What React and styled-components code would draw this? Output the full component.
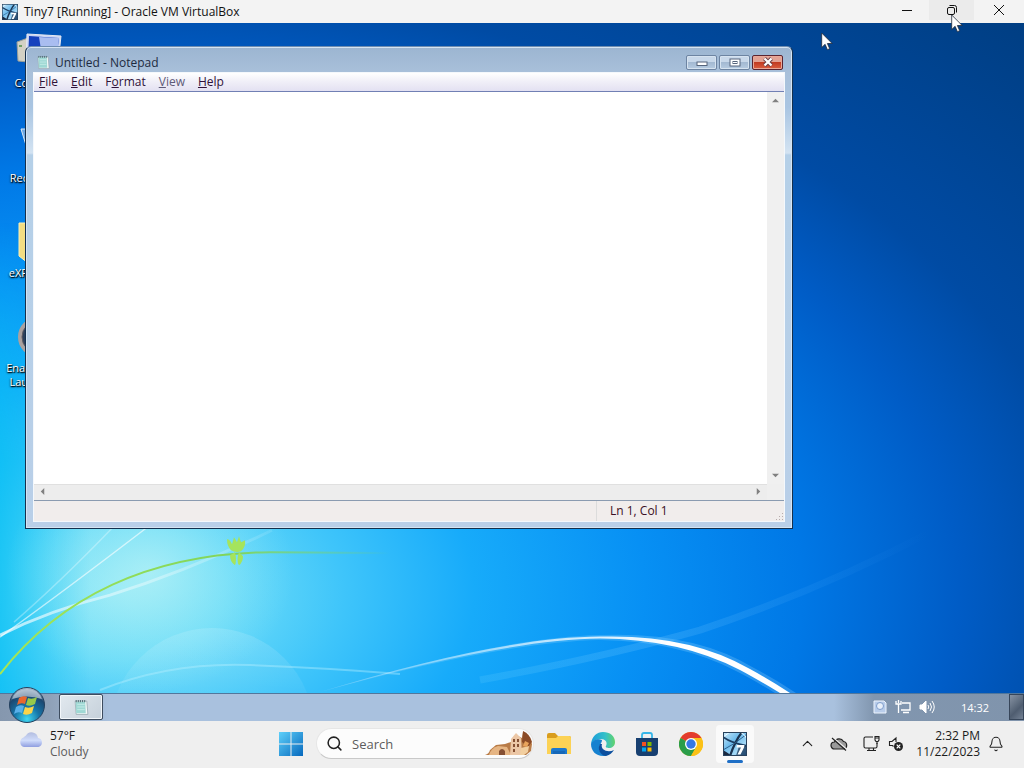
import styled, { createGlobalStyle, css } from 'styled-components';
import { Search, Bell, ChevronUp } from 'lucide-react';

// The notepad window covers the rest of every label
const desktopIcons = [
  { lines: ['Co'], kind: 'computer' },
  { lines: ['Rec'], kind: 'bin' },
  { lines: ['eXP'], kind: 'folder' },
  { lines: ['Enal', 'Lau'], kind: 'disc' },
];

const menus = [
  { key: 'F', before: '', after: 'ile' },
  { key: 'E', before: '', after: 'dit' },
  { key: 'o', before: 'F', after: 'rmat' },
  { key: 'V', before: '', after: 'iew', muted: true },
  { key: 'H', before: '', after: 'elp' },
];

function TinyLogo({ size }) {
  return (
    <svg width={size} height={size} viewBox="0 0 24 24" aria-hidden="true">
      <defs>
        <linearGradient id={`tiny${size}`} x1="0" y1="0" x2="1" y2="1">
          <stop offset="0" stopColor="#cdeaf9" />
          <stop offset="0.4" stopColor="#6fbcec" />
          <stop offset="0.7" stopColor="#a5d9f6" />
          <stop offset="1" stopColor="#2a86cc" />
        </linearGradient>
      </defs>
      <rect width="24" height="24" fill={`url(#tiny${size})`} />
      <path d="M0 18q5 3 9 6H0z" fill="#1a2940" />
      <path d="M0 5q8 6 24 9" fill="none" stroke="#1b3d62" strokeWidth="1.800" />
      <path d="M19 0Q12 9 7 24" fill="none" stroke="#1b3350" strokeWidth="2.200" />
      <path d="M0 18Q12 12 24 2" fill="none" stroke="#2c608f" strokeWidth="1" />
      <path d="M0 5L7 0M17 0q5 2 7 7" fill="none" stroke="#f0faff" strokeWidth="1" />
      <path d="M13 24l3-10h8v10z" fill="#1b3555" fillOpacity="0.75" />
      <path d="M14 13h7.500l-.5 2.500-3.500 7h-3l3.500-7h-4.500z" fill="#fff" />
      <rect x="0.5" y="0.5" width="23" height="23" fill="none" stroke="#28415c" />
    </svg>
  );
}

function NotepadIcon({ size }) {
  return (
    <svg width={size} height={size} viewBox="0 0 16 16" aria-hidden="true">
      <path d="M2 2h11l1 12.500H3z" fill="#f4f8f8" stroke="#92a5ad" strokeWidth="0.700" />
      <path d="M2.500 2.500h9l.5 11h-9z" fill="#9fd8d4" />
      <path d="M4 5h7M4 7.500h7M4 10h7" stroke="#c9eeea" strokeWidth="0.800" />
      <path d="M3 1v2M5 1v2M7 1v2M9 1v2M11 1v2" stroke="#47666d" strokeWidth="0.900" />
    </svg>
  );
}

function Cursor() {
  return (
    <svg width="12" height="19" viewBox="0 0 12 19" aria-hidden="true">
      <path d="M.7 1v14.500l3.400-3.200 2.300 5.400 2.300-1-2.300-5.200h4.800z" fill="#fff" stroke="#222b3a" strokeWidth="0.800" />
    </svg>
  );
}

function DesktopGlyph({ kind }) {
  if (kind === 'computer') {
    return (
      <svg width="48" height="48" viewBox="0 0 48 48" aria-hidden="true">
        <path d="M3 14l11-4v24l-10-1z" fill="#d3d1c4" stroke="#9aa09a" />
        <path d="M5 18h3" stroke="#4f8f4a" strokeWidth="1.500" />
        <path d="M13 6l34 2-3 27H12z" fill="#cbd6f4" stroke="#e6e9f2" />
        <path d="M15 8l30 2-3 24H14z" fill="#1541bd" />
        <path d="M25 9l20 1-3 24H29z" fill="#a9bdf0" />
      </svg>
    );
  }
  if (kind === 'bin') {
    return (
      <svg width="48" height="48" viewBox="0 0 48 48" aria-hidden="true">
        <path d="M7 6h34l-6 26H15z" fill="#b8d1e8" fillOpacity="0.6" stroke="#dce8f4" />
      </svg>
    );
  }
  if (kind === 'folder') {
    return (
      <svg width="48" height="48" viewBox="0 0 48 48" aria-hidden="true">
        <path d="M5 5h20l4 4h12v36H14l-9-7z" fill="#f3dd82" stroke="#fbf0b5" />
      </svg>
    );
  }
  return (
    <svg width="48" height="48" viewBox="0 0 48 48" aria-hidden="true">
      <circle cx="24" cy="24" r="18" fill="#2c405c" stroke="#aaa19f" strokeWidth="4" />
      <circle cx="24" cy="24" r="16" fill="none" stroke="#5d5b62" />
    </svg>
  );
}

function Wallpaper() {
  return (
    <WallpaperSvg viewBox="0 0 1024 671" preserveAspectRatio="none" aria-hidden="true">
      <defs>
        <radialGradient id="sky" gradientUnits="userSpaceOnUse" cx="0" cy="0" r="820" gradientTransform="translate(120 570) scale(1.600 1)">
          <stop offset="0" stopColor="#8de7f7" />
          <stop offset="0.08" stopColor="#6cdcf8" />
          <stop offset="0.17" stopColor="#3fc5fa" />
          <stop offset="0.27" stopColor="#17abfa" />
          <stop offset="0.4" stopColor="#0790f4" />
          <stop offset="0.52" stopColor="#0078e6" />
          <stop offset="0.64" stopColor="#005cc6" />
          <stop offset="0.74" stopColor="#004ba4" />
          <stop offset="1" stopColor="#003d80" />
        </radialGradient>
        <radialGradient id="glow" gradientUnits="userSpaceOnUse" cx="0" cy="0" r="120" gradientTransform="translate(150 550) scale(1.200 1)">
          <stop offset="0" stopColor="#c3f5f5" stopOpacity="0.6" />
          <stop offset="1" stopColor="#9becf7" stopOpacity="0" />
        </radialGradient>
        <linearGradient id="edge" x1="0" x2="1">
          <stop offset="0" stopColor="#00bff4" stopOpacity="0.7" />
          <stop offset="1" stopColor="#00bff4" stopOpacity="0" />
        </linearGradient>
        <linearGradient id="edgeFade" x1="0" y1="0" x2="0" y2="1">
          <stop offset="0" stopColor="#000" />
          <stop offset="0.5" stopColor="#fff" />
        </linearGradient>
        <mask id="edgeMask">
          <rect y="200" width="90" height="471" fill="url(#edgeFade)" />
        </mask>
        <linearGradient id="arc" x1="0" x2="1">
          <stop offset="0" stopColor="#fff" stopOpacity="0.1" />
          <stop offset="0.5" stopColor="#fff" stopOpacity="0.7" />
          <stop offset="0.75" stopColor="#fff" />
          <stop offset="1" stopColor="#fff" />
        </linearGradient>
        <linearGradient id="stem" x1="0" x2="1">
          <stop offset="0" stopColor="#a6e653" />
          <stop offset="0.6" stopColor="#7fd45c" />
          <stop offset="1" stopColor="#7fd45c" stopOpacity="0" />
        </linearGradient>
        <linearGradient id="bubble" x1="0" y1="0" x2="0" y2="1">
          <stop offset="0" stopColor="#fff" stopOpacity="0.14" />
          <stop offset="0.4" stopColor="#fff" stopOpacity="0.03" />
        </linearGradient>
        <linearGradient id="beam" x1="0" x2="1">
          <stop offset="0" stopColor="#fff" stopOpacity="0.7" />
          <stop offset="1" stopColor="#fff" stopOpacity="0.1" />
        </linearGradient>
        <linearGradient id="ray" x1="0" x2="1">
          <stop offset="0" stopColor="#7fdcff" stopOpacity="0.15" />
          <stop offset="0.4" stopColor="#6cc4ff" stopOpacity="0.25" />
          <stop offset="1" stopColor="#4aa8ff" stopOpacity="0" />
        </linearGradient>
      </defs>
      <rect width="1024" height="671" fill="url(#sky)" />
      <rect y="200" width="90" height="471" fill="url(#edge)" mask="url(#edgeMask)" />
      <ellipse cx="150" cy="550" rx="144" ry="120" fill="url(#glow)" />
      <circle cx="212" cy="708" r="102" fill="url(#bubble)" />
      <path d="M0 615Q60 572 146 506" fill="none" stroke="#fff" strokeOpacity="0.6" strokeWidth="1.500" />
      <path d="M14 600Q60 560 112 506" fill="none" stroke="#fff" strokeOpacity="0.3" strokeWidth="1.500" />
      <path d="M0 613Q50 588 110 573Q190 548 272 508" fill="none" stroke="url(#beam)" strokeWidth="3" />
      <path d="M480 658Q600 636 700 608Q820 568 930 510" fill="none" stroke="url(#ray)" strokeWidth="7" />
      <path d="M100 668Q170 640 250 643T400 652" fill="none" stroke="#b9f0ff" strokeOpacity="0.4" strokeWidth="2" />
      <path d="M320 670Q500 615 600 613Q694 609 754 646Q775 657 796 671H775Q752 657 736 649Q678 619 600 618Q500 620 320 670z" fill="#9fdcff" fillOpacity="0.25" />
      <path d="M320 670Q500 615 600 614.500Q690 612 750 647Q770 658 790 671H780Q755 656 740 648Q680 617 600 616.500Q500 618 320 670z" fill="url(#arc)" />
      <path d="M0 652C60 575 150 531 270 530Q320 530 390 531" fill="none" stroke="url(#stem)" strokeWidth="2" />
      <path d="M227 517q3 0 5 5l2-7 3 5 2-6 2 6 4-2q1 7-4 11-5 2-10-1-4-4-4-11zM235 530l-5 3q0 7 5 10 2-5 0-13zM239 530l4 4q0 6-4 9-3-5 0-13z" fill="#a5e45c" />
    </WallpaperSvg>
  );
}

function App() {
  return (
    <>
      <GlobalStyle />
      <Screen>
        <TitleBar>
          <TinyLogo size={16} />
          <TitleText>Tiny7 [Running] - Oracle VM VirtualBox</TitleText>
          <HostButton aria-label="Minimize">
            <svg width="10" height="10" viewBox="0 0 10 10"><path d="M0 5.500h10" stroke="#111" /></svg>
          </HostButton>
          <HostButton aria-label="Restore" $hover>
            <svg width="10" height="10" viewBox="0 0 10 10" fill="none" stroke="#111">
              <rect x="0.5" y="2.5" width="7" height="7" rx="1.5" />
              <path d="M2.500.5h5q2 0 2 2v5" />
            </svg>
          </HostButton>
          <HostButton aria-label="Close">
            <svg width="10" height="10" viewBox="0 0 10 10"><path d="M0 0l10 10M10 0L0 10" stroke="#111" /></svg>
          </HostButton>
        </TitleBar>

        <Desktop>
          <Wallpaper />
          <IconColumn>
            {desktopIcons.map((icon) => (
              <DesktopIcon key={icon.kind}>
                <DesktopGlyph kind={icon.kind} />
                {icon.lines.map((line) => (
                  <IconLabel key={line}>{line}</IconLabel>
                ))}
              </DesktopIcon>
            ))}
          </IconColumn>

          <NotepadWindow>
            <Caption>
              <NotepadIcon size={15} />
              <CaptionText>Untitled - Notepad</CaptionText>
              <CaptionButton aria-label="Minimize">
                <svg width="12" height="8" viewBox="0 0 12 8"><rect x="1" y="4" width="10" height="3.500" fill="#fff" stroke="#56657c" /></svg>
              </CaptionButton>
              <CaptionButton aria-label="Maximize">
                <svg width="12" height="9" viewBox="0 0 12 9" fill="#fff" stroke="#56657c"><rect x="1" y="1" width="10" height="7" /><rect x="4" y="3.500" width="4" height="2" /></svg>
              </CaptionButton>
              <CaptionButton aria-label="Close" $danger>
                <svg width="12" height="10" viewBox="0 0 12 10">
                  <path d="M2.500 1.500l7 7M9.500 1.500l-7 7" stroke="#6a4048" strokeWidth="4" />
                  <path d="M2.500 1.500l7 7M9.500 1.500l-7 7" stroke="#fff" strokeWidth="2.200" />
                </svg>
              </CaptionButton>
            </Caption>
            <Client>
              <MenuBar>
                {menus.map((m) => (
                  <MenuItem key={m.after} $muted={m.muted}>
                    {m.before}<u>{m.key}</u>{m.after}
                  </MenuItem>
                ))}
              </MenuBar>
              <Editor>
                <TextArea aria-label="Text" spellCheck={false} />
                <VerticalBar>
                  <Arrow viewBox="0 0 8 8"><path d="M0 6l4-4 4 4z" /></Arrow>
                  <Arrow viewBox="0 0 8 8"><path d="M0 2l4 4 4-4z" /></Arrow>
                </VerticalBar>
                <HorizontalBar>
                  <Arrow viewBox="0 0 8 8"><path d="M6 0L2 4l4 4z" /></Arrow>
                  <Arrow viewBox="0 0 8 8"><path d="M2 0l4 4-4 4z" /></Arrow>
                </HorizontalBar>
                <Corner />
              </Editor>
              <StatusBar>
                <StatusCell>Ln 1, Col 1</StatusCell>
                <svg width="8" height="8" viewBox="0 0 8 8" fill="#b9adad" aria-hidden="true">
                  <path d="M6 0h1v1H6zM3 3h1v1H3zM6 3h1v1H6zM0 6h1v1H0zM3 6h1v1H3zM6 6h1v1H6z" />
                </svg>
              </StatusBar>
            </Client>
          </NotepadWindow>
        </Desktop>

        <GuestTaskbar>
          <StartOrb aria-label="Start">
            <svg width="38" height="38" viewBox="0 0 38 38">
              <defs>
                <radialGradient id="orb" cx="0.5" cy="0.9" r="0.9">
                  <stop offset="0" stopColor="#3fd8f2" />
                  <stop offset="0.4" stopColor="#1675a8" />
                  <stop offset="0.75" stopColor="#1c4770" />
                  <stop offset="1" stopColor="#b8c8d8" />
                </radialGradient>
              </defs>
              <circle cx="19" cy="19" r="17.500" fill="url(#orb)" stroke="#24405e" />
              <path d="M4 13Q8 3 19 3T34 13Q19 8 4 13z" fill="#c3d0dd" fillOpacity="0.7" />
              <path d="M11 12q4-3 8-1l-2 7q-4-2-8 1z" fill="#e9672f" />
              <path d="M20 12q4 2 9-1l-2 7q-5 3-9 1z" fill="#97c94b" />
              <path d="M8 21q4-3 8-1l-2 7q-4-2-8 1z" fill="#59b0ea" />
              <path d="M17 21q4 2 9-1l-2 7q-5 3-9 1z" fill="#fbd44a" />
            </svg>
          </StartOrb>
          <GuestTask aria-label="Untitled - Notepad"><NotepadIcon size={17} /></GuestTask>
          <GuestTray>
            <svg width="14" height="14" viewBox="0 0 14 14" aria-hidden="true">
              <path d="M1 1h10l2 2v10H1z" fill="#b9cdea" stroke="#eef4fd" />
              <circle cx="7" cy="6" r="3.500" fill="#e7effa" stroke="#7d9ccb" />
            </svg>
            <svg width="16" height="14" viewBox="0 0 16 14" fill="none" stroke="#fff" strokeWidth="1.300" aria-hidden="true">
              <path d="M7 3h8v7H6M8 12.500h6M1 1v3h5V1M3.500 0v3M3.500 4v9" />
            </svg>
            <svg width="16" height="14" viewBox="0 0 16 14" fill="none" stroke="#fff" aria-hidden="true">
              <path d="M1 5h2l4-4v12L3 9H1z" fill="#fff" />
              <path d="M9 5q1.500 2 0 4M11 3q3 4 0 8M13 1q4.500 6 0 12" />
            </svg>
            <GuestClock>14:32</GuestClock>
          </GuestTray>
          <ShowDesktop aria-label="Show desktop" />
        </GuestTaskbar>

        <HostTaskbar>
          <Weather>
            <svg width="26" height="20" viewBox="0 0 26 20" aria-hidden="true">
              <defs>
                <linearGradient id="cloud" x1="0" y1="0" x2="0" y2="1">
                  <stop offset="0" stopColor="#b3bde0" />
                  <stop offset="0.55" stopColor="#d0dcfb" />
                  <stop offset="1" stopColor="#8f9ee0" />
                </linearGradient>
              </defs>
              <path d="M6 19a5 5 0 0 1-.5-9.500Q7 8 8 7.500a6.500 6.500 0 0 1 12 2.500 4.600 4.600 0 0 1 .5 9z" fill="url(#cloud)" />
            </svg>
            <WeatherText>
              57°F
              <small>Cloudy</small>
            </WeatherText>
          </Weather>

          <Apps>
            <AppButton aria-label="Start">
              <svg width="24" height="24" viewBox="0 0 24 24">
                <defs>
                  <linearGradient id="win" gradientUnits="userSpaceOnUse" x1="0" y1="0" x2="24" y2="24">
                    <stop offset="0" stopColor="#5ed0fa" />
                    <stop offset="1" stopColor="#0668bd" />
                  </linearGradient>
                </defs>
                <path d="M0 0h11.500v11.500H0zM12.500 0H24v11.500H12.500zM0 12.500h11.500V24H0zM12.500 12.500H24V24H12.500z" fill="url(#win)" />
              </svg>
            </AppButton>
            <SearchBox>
              <Search size={17} color="#222" strokeWidth={2.2} />
              <SearchInput type="text" aria-label="Search" placeholder="Search" />
              <svg width="48" height="28" viewBox="0 0 48 28" aria-hidden="true">
                <path d="M0 25q4-1 5-5l6-5 9-1 6-2 5-7 6 3 1-6 6 5 3 7-1 7-5 4z" fill="#b87b47" />
                <path d="M4 25q2-7 9-9l9 1 4 8z" fill="#e6b583" />
                <path d="M25 25l1-16 5-6 5 5 1 17z" fill="#ecc7a6" />
                <path d="M38 1q7 3 9 11l-4 5-6-5z" fill="#8b4b27" />
                <path d="M14 25v-4q3-4 6 0v4zM28 9h2v3h-2zM32 9h2v3h-2zM28 14h2v3h-2zM32 14h2v3h-2zM28 19h2v3h-2z" fill="#865033" />
                <path d="M36 18l8-2-1 6-4 3h-4z" fill="#f2cfa0" />
                <path d="M40 11l4 2-2 4-4-1z" fill="#e9a45c" />
              </svg>
            </SearchBox>
            <AppButton aria-label="File Explorer">
              <svg width="26" height="24" viewBox="0 0 26 24">
                <path d="M1 3q0-2 2-2h6l3 3h11q2 0 2 2v6H1z" fill="#d99d1e" />
                <path d="M1 6h9l2-2h11q2 0 2 2v16H1z" fill="#fcd255" />
                <path d="M5 22v-4q0-2 2-2h12q2 0 2 2v4z" fill="#1c78cd" />
                <path d="M7 19h12v3H7z" fill="#1768b8" />
              </svg>
            </AppButton>
            <AppButton aria-label="Microsoft Edge">
              <svg width="24" height="24" viewBox="0 0 24 24">
                <defs>
                  <linearGradient id="edgeTop" x1="0" x2="1">
                    <stop offset="0" stopColor="#1a9bdb" />
                    <stop offset="0.6" stopColor="#35c1c8" />
                    <stop offset="1" stopColor="#62d36b" />
                  </linearGradient>
                </defs>
                <path d="M0 12C1 4 6 0 12 0c7 0 12 4 12 10 0 4-3 6-6 6-2 0-4-1-3-2 2-4-1-7-5-7-5 0-9 3-10 5z" fill="url(#edgeTop)" />
                <path d="M0 12c0 7 5 12 12 12 1 0 3 0 4-.5C9 22 7 17 9 13c1-2 2-3 2-5-5-2-10 1-11 4z" fill="#1681d0" />
                <path d="M9 12c-3 5 0 11 6 12 4-1 6-3 8-6-6 3-14 0-12-6z" fill="#0c4f9e" />
              </svg>
            </AppButton>
            <AppButton aria-label="Microsoft Store">
              <svg width="24" height="24" viewBox="0 0 24 24">
                <path d="M7 7V3q0-2 2-2h6q2 0 2 2v4" fill="none" stroke="#35b5e8" strokeWidth="1.800" />
                <path d="M1 6h22v14q0 4-4 4H5q-4 0-4-4z" fill="#173f70" />
                <path d="M7 10h4v4H7z" fill="#f25022" />
                <path d="M12.500 10h4v4h-4z" fill="#7fba00" />
                <path d="M7 15.500h4v4H7z" fill="#00a4ef" />
                <path d="M12.500 15.500h4v4h-4z" fill="#ffb900" />
              </svg>
            </AppButton>
            <AppButton aria-label="Google Chrome">
              <svg width="24" height="24" viewBox="0 0 24 24">
                <circle cx="12" cy="12" r="12" fill="#fbc116" />
                <path d="M12 12L1.600 6A12 12 0 0 1 22.400 6z" fill="#e33b2e" />
                <path d="M1.600 6A12 12 0 0 0 12 24l5.200-9L12 12z" fill="#2a9d4a" />
                <path d="M17.200 15L12 24A12 12 0 0 0 22.400 6H12z" fill="#fbc116" />
                <circle cx="12" cy="12" r="6" fill="#fff" />
                <circle cx="12" cy="12" r="4.700" fill="#3478e5" />
              </svg>
            </AppButton>
            <AppButton aria-label="Tiny7" $active>
              <TinyLogo size={24} />
            </AppButton>
          </Apps>

          <HostTray>
            <TrayGroup>
              <TrayButton aria-label="Show hidden icons" $wide><ChevronUp size={17} strokeWidth={1.6} /></TrayButton>
              <TrayButton aria-label="OneDrive" $wide>
                <svg width="18" height="16" viewBox="0 0 18 16">
                  <path d="M4.500 13a3.500 3.500 0 0 1 0-7 5 5 0 0 1 9-.5 3.800 3.800 0 0 1 0 7.500z" fill="#9a9a9a" stroke="#222" strokeWidth="1.200" />
                  <path d="M3.500 2l13 11" stroke="#eee" strokeWidth="1.500" />
                  <path d="M2 2l14 12.500" stroke="#222" strokeWidth="1.200" />
                </svg>
              </TrayButton>
            </TrayGroup>
            <TrayButton aria-label="Network">
              <svg width="17" height="17" viewBox="0 0 17 17" fill="none" stroke="#222" strokeWidth="1.100">
                <path d="M10 2H2.500Q1 2 1 3.500v8Q1 13 2.500 13h10q1.500 0 1.500-1.500V8M4 15.500h9M6 13v2.500M10.500 13v2.500" />
                <path d="M12 1.500h4v3.500l-1 1.500h-2L12 5zM14 6.500V9M12 3h4" />
              </svg>
            </TrayButton>
            <TrayButton aria-label="Volume muted">
              <svg width="16" height="16" viewBox="0 0 16 16">
                <path d="M5.500 10.500L4.500 9.500H1.500v-4H4L8 2v4" fill="none" stroke="#222" strokeWidth="1.100" />
                <circle cx="10.500" cy="10.500" r="4.500" fill="#222" />
                <path d="M8.700 8.700l3.600 3.600M12.300 8.700l-3.600 3.600" stroke="#fff" strokeWidth="1.200" />
              </svg>
            </TrayButton>
            <HostClock>
              <span>2:32 PM</span>
              <span>11/22/2023</span>
            </HostClock>
            <TrayButton aria-label="Notifications">
              <Bell size={16} strokeWidth={1.6} />
            </TrayButton>
          </HostTray>
        </HostTaskbar>

        <Pointer $x="821px" $y="32px"><Cursor /></Pointer>
        <Pointer $x="951px" $y="14px"><Cursor /></Pointer>
      </Screen>
    </>
  );
}

const GlobalStyle = createGlobalStyle`
  * {
    box-sizing: border-box;
  }

  body {
    margin: 0;
    font-family: 'Open Sans', 'Noto Sans', sans-serif;
    font-size: 12px;
    color: #1b1b1b;
  }

  button, input, textarea {
    font: inherit;
    color: inherit;
    border: 0;
    padding: 0;
    margin: 0;
    background: none;
  }

  svg {
    display: block;
    flex: none;
  }
`;

const Screen = styled.div`
  position: relative;
  display: flex;
  flex-direction: column;
  height: 100vh;
  overflow: hidden;
`;

// Host window title bar
const TitleBar = styled.header`
  display: flex;
  align-items: center;
  height: 23px;
  padding-left: 2px;
  background: #f3f3f3;
  flex: none;
`;

const TitleText = styled.h1`
  flex: 1;
  margin: 0 0 0 6px;
  font-size: 12px;
  font-weight: 400;
  color: #111;
`;

const HostButton = styled.button`
  display: flex;
  align-items: center;
  justify-content: center;
  width: 45px;
  height: 20px;
  align-self: flex-start;
  background: ${(p) => (p.$hover ? '#ebebeb' : 'transparent')};

  &:last-child {
    width: 50px;
  }
`;

// Guest desktop
const Desktop = styled.main`
  position: relative;
  flex: 1;
  min-height: 0;
  overflow: hidden;
  background: #0078e8;
`;

const WallpaperSvg = styled.svg`
  position: absolute;
  inset: 0;
  width: 100%;
  height: 100%;
`;

const IconColumn = styled.div`
  position: relative;
  display: flex;
  flex-direction: column;
  width: 76px;
  padding-top: 5px;
`;

const DesktopIcon = styled.div`
  height: 95px;
  color: #fff;
  text-shadow: 0 1px 2px #000, 1px 1px 1px #000;

  svg {
    margin-left: 14px;
  }
`;

const IconLabel = styled.div`
  width: 28px;
  font-size: 11px;
  line-height: 14px;
  text-align: right;
`;

// Notepad
const NotepadWindow = styled.section`
  position: absolute;
  top: 23px;
  left: 25px;
  display: flex;
  flex-direction: column;
  width: 768px;
  max-width: calc(100% - 32px);
  height: 483px;
  padding: 0 7px 6px;
  border: 1px solid #14304e;
  border-top-color: #6f8db0;
  border-radius: 6px 6px 0 0;
  background: linear-gradient(180deg, #9cb5d1 0, #a9c0da 26px, #a9c5e2 60px, #d3e3f2 106px, #b5d0e8 108px, #b9cfe8 100%);
  box-shadow: inset 0 0 0 1px #d5e4f3;
`;

const Caption = styled.div`
  display: flex;
  align-items: center;
  gap: 2px;
  height: 25px;
  padding: 5px 2px 0 3px;
  flex: none;
`;

const CaptionText = styled.h2`
  flex: 1;
  margin: 0 0 0 2px;
  font-size: 12px;
  font-weight: 400;
  color: #1d2b3f;
`;

const CaptionButton = styled.button`
  display: flex;
  align-items: center;
  justify-content: center;
  width: 31px;
  height: 15px;
  border: 1px solid #6d84a2;
  border-radius: 2px;
  background: linear-gradient(#c8d8ea 0 45%, #a3b9d2 50%, #b7cce2);
  box-shadow: inset 0 0 0 1px #d6e3f0;

  ${(p) => p.$danger && css`
    border-color: #5b2430;
    background: linear-gradient(#e3a294 0 45%, #c23b22 50%, #dc5f42);
    box-shadow: inset 0 0 0 1px #e9a898;
  `}
`;

const Client = styled.div`
  flex: 1;
  min-height: 0;
  display: flex;
  flex-direction: column;
  border: 1px solid #f4f8fc;
  background: #fff;
`;

const MenuBar = styled.nav`
  display: flex;
  gap: 13px;
  height: 19px;
  padding-left: 5px;
  background: linear-gradient(#fff, #f1f0f8 45%, #e3e1f2);
  border-bottom: 1px solid #7180b4;
  flex: none;
`;

const MenuItem = styled.button`
  font-size: 12px;
  line-height: 18px;
  color: ${(p) => (p.$muted ? '#5e5a78' : '#2f1238')};
`;

const Editor = styled.div`
  flex: 1;
  min-height: 0;
  display: grid;
  grid-template-columns: 1fr 17px;
  grid-template-rows: 1fr 16px;
`;

const TextArea = styled.textarea`
  width: 100%;
  resize: none;
  outline: none;
  overflow: hidden;
  background: #fff;
`;

const VerticalBar = styled.div`
  display: flex;
  flex-direction: column;
  align-items: center;
  justify-content: space-between;
  padding: 5px 0;
  background: #f0f0f0;
`;

const HorizontalBar = styled.div`
  display: flex;
  align-items: center;
  justify-content: space-between;
  padding: 0 5px 3px;
  background: #ededed;
  border-top: 1px solid #e0e0e0;
`;

const Corner = styled.div`
  background: #efefef;
`;

const Arrow = styled.svg`
  width: 7px;
  height: 7px;
  fill: #808080;
`;

const StatusBar = styled.footer`
  display: flex;
  align-items: flex-end;
  justify-content: flex-end;
  height: 21px;
  border-top: 1px solid #8b9bb0;
  background: #f1edec;
  flex: none;
`;

const StatusCell = styled.div`
  width: 180px;
  padding-left: 13px;
  border-left: 1px solid #dcdcdc;
  font-size: 12px;
  line-height: 20px;
  color: #3b1024;
`;

// Guest taskbar
const GuestTaskbar = styled.div`
  position: relative;
  display: flex;
  align-items: stretch;
  height: 28px;
  padding-bottom: 1px;
  border-top: 1px solid #51779c;
  background: linear-gradient(90deg, #8597ae 0, #8fa1b8 50px, #a9c1de 110px, #a9c1de calc(100% - 190px), #8196af calc(100% - 150px), #8094ac 100%);
  flex: none;
`;

const StartOrb = styled.button`
  width: 54px;
  margin: -8px 0 -3px;
  padding-left: 8px;
`;

const GuestTask = styled.button`
  display: flex;
  align-items: center;
  justify-content: center;
  width: 44px;
  height: 26px;
  margin-left: 5px;
  border: 1px solid #3d4c5e;
  border-radius: 2px;
  background: linear-gradient(135deg, #e2e9ef, #c5d0da);
  box-shadow: inset 0 0 0 1px #f2f6fa;
`;

const GuestTray = styled.div`
  display: flex;
  align-items: center;
  gap: 8px;
  margin-left: auto;
  padding-right: 20px;
`;

const GuestClock = styled.time`
  margin-left: 18px;
  font-size: 11px;
  color: #fff;
`;

const ShowDesktop = styled.button`
  width: 15px;
  border: 1px solid #37465a;
  background: linear-gradient(135deg, #8793a3, #4f5d70 60%, #748194);
`;

// Host taskbar
const HostTaskbar = styled.footer`
  display: flex;
  align-items: center;
  justify-content: space-between;
  height: 47px;
  padding: 0 20px 2px 18px;
  background: #efefef;
  flex: none;
`;

const Weather = styled.div`
  display: flex;
  gap: 6px;
  width: 240px;
  min-width: 0;
`;

const WeatherText = styled.div`
  line-height: 16px;

  small {
    display: block;
    font-size: 12px;
    color: #5c5c5c;
  }
`;

const Apps = styled.nav`
  display: flex;
  align-items: center;
  gap: 6px;
  margin-left: 4px;
`;

const AppButton = styled.button`
  position: relative;
  display: flex;
  align-items: center;
  justify-content: center;
  width: 38px;
  height: 38px;
  border-radius: 4px;
  background: ${(p) => (p.$active ? '#fafafa' : 'transparent')};

  ${(p) => p.$active && css`
    &::after {
      content: '';
      position: absolute;
      bottom: 0;
      left: 11px;
      width: 16px;
      height: 3px;
      border-radius: 2px;
      background: #1f6fc6;
    }
  `}
`;

const SearchBox = styled.label`
  display: flex;
  align-items: center;
  gap: 9px;
  width: 218px;
  height: 31px;
  padding-left: 9px;
  border: 1px solid #e6e6e6;
  border-bottom-color: #c9c9c9;
  border-radius: 16px;
  background: #fcfcfc;
`;

const SearchInput = styled.input`
  flex: 1;
  min-width: 0;
  font-size: 13px;
  outline: none;

  &::placeholder {
    color: #5c5c5c;
    opacity: 1;
  }
`;

const HostTray = styled.div`
  display: flex;
  align-items: center;
  justify-content: flex-end;
  gap: 8px;
  width: 240px;
`;

const TrayGroup = styled.div`
  display: flex;
  align-items: center;
`;

const TrayButton = styled.button`
  display: flex;
  justify-content: center;
  width: ${(p) => (p.$wide ? '32px' : 'auto')};
  color: #222;
`;

const HostClock = styled.div`
  display: flex;
  flex-direction: column;
  align-items: flex-end;
  margin-left: 4px;
  line-height: 16px;
`;

// Mouse pointers float above everything
const Pointer = styled.div`
  position: absolute;
  left: ${(p) => p.$x};
  top: ${(p) => p.$y};
  pointer-events: none;
`;

export default App;
